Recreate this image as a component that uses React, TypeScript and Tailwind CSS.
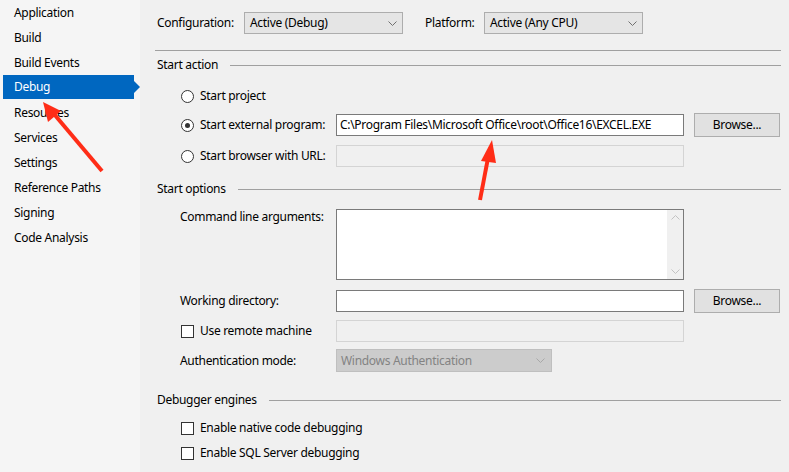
import React from "react";

const navItems = [
  "Application",
  "Build",
  "Build Events",
  "Debug",
  "Resources",
  "Services",
  "Settings",
  "Reference Paths",
  "Signing",
  "Code Analysis",
];

function Chevron({ color = "#707070", up = false }: { color?: string; up?: boolean }) {
  return (
    <svg width="9" height="5" viewBox="0 0 9 5">
      <path
        d={up ? "M0.5 4.5 L4.5 0.5 L8.5 4.5" : "M0.5 0.5 L4.5 4.5 L8.5 0.5"}
        fill="none"
        stroke={color}
        strokeWidth="1"
      />
    </svg>
  );
}

function Select({ value }: { value: string }) {
  return (
    <div className="flex h-[22px] w-[159px] items-center justify-between border border-[#adadad] bg-[#e5e5e5] pl-[5px] pr-[5px]">
      <span>{value}</span>
      <Chevron />
    </div>
  );
}

function TextBox({ value, disabled, className = "" }: { value?: string; disabled?: boolean; className?: string }) {
  return (
    <div
      className={
        "flex h-[22px] w-[348px] items-center pl-[3px] " +
        (disabled ? "border border-[#d4d4d4] bg-[#f0f0f0]" : "border border-[#7a7a7a] bg-white") +
        " " +
        className
      }
    >
      {value}
    </div>
  );
}

function BrowseButton() {
  return (
    <div className="ml-[10px] flex h-[24px] w-[86px] items-center justify-center border border-[#adadad] bg-[#e1e1e1]">
      Browse...
    </div>
  );
}

function Radio({ checked }: { checked?: boolean }) {
  return (
    <div className="flex h-[13px] w-[13px] items-center justify-center rounded-full border border-[#333333] bg-white">
      {checked && <div className="h-[5px] w-[5px] rounded-full bg-[#333333]" />}
    </div>
  );
}

function Checkbox() {
  return <div className="h-[13px] w-[13px] border border-[#333333] bg-white" />;
}

function SectionHeader({ title, className = "" }: { title: string; className?: string }) {
  return (
    <div className={"flex h-[16px] items-center pl-[2px] " + className}>
      <span>{title}</span>
      <div className="ml-[12px] h-px flex-1 bg-[#a0a0a0]" />
    </div>
  );
}

export default function App() {
  return (
    <div className="relative flex h-[472px] w-[789px] overflow-hidden font-['Noto_Sans',sans-serif] text-[12px] leading-[16px] tracking-[-0.3px] text-black">
      {/* side nav */}
      <div className="w-[140px] bg-[#f5f5f5]">
        {navItems.map((item) =>
          item === "Debug" ? (
            <div key={item} className="flex h-[25px] items-start">
              <div className="relative ml-[3px] flex h-[24px] w-[131px] items-center bg-[#0067c0] pl-[11px] text-white">
                {item}
                <div className="absolute right-[-6px] top-[6px] h-0 w-0 border-y-[6px] border-l-[6px] border-y-transparent border-l-[#0067c0]" />
              </div>
            </div>
          ) : (
            <div key={item} className="flex h-[25px] items-center pl-[14px]">
              {item}
            </div>
          )
        )}
      </div>

      {/* page */}
      <div className="flex-1 bg-[#f0f0f0] pl-[15px] pr-[8px] pt-[12px]">
        <div className="flex h-[22px] items-center pl-[2px]">
          <span className="w-[87px]">Configuration:</span>
          <Select value="Active (Debug)" />
          <span className="ml-[22px] w-[59px]">Platform:</span>
          <Select value="Active (Any CPU)" />
        </div>
        <div className="mt-[16px] h-px bg-[#a0a0a0]" />

        <SectionHeader title="Start action" className="mt-[6px]" />
        <div className="mt-[12px] flex h-[22px] items-center pl-[26px]">
          <Radio />
          <span className="ml-[6px]">Start project</span>
        </div>
        <div className="mt-[6px] flex h-[24px] items-center pl-[26px]">
          <div className="flex w-[155px] items-center">
            <Radio checked />
            <span className="ml-[6px]">Start external program:</span>
          </div>
          <TextBox value="C:\Program Files\Microsoft Office\root\Office16\EXCEL.EXE" />
          <BrowseButton />
        </div>
        <div className="mt-[8px] flex h-[22px] items-center pl-[26px]">
          <div className="flex w-[155px] items-center">
            <Radio />
            <span className="ml-[6px]">Start browser with URL:</span>
          </div>
          <TextBox disabled />
        </div>

        <SectionHeader title="Start options" className="mt-[14px]" />
        <div className="mt-[12px] flex items-start pl-[25px]">
          <span className="w-[156px]">Command line arguments:</span>
          <div className="flex h-[71px] w-[348px] border border-[#7a7a7a] bg-white">
            <div className="flex-1" />
            <div className="flex w-[16px] flex-col items-center justify-between bg-[#f0f0f0] py-[5px]">
              <Chevron color="#c2c2c2" up />
              <Chevron color="#c2c2c2" />
            </div>
          </div>
        </div>
        <div className="mt-[9px] flex h-[24px] items-center pl-[25px]">
          <span className="w-[156px]">Working directory:</span>
          <TextBox />
          <BrowseButton />
        </div>
        <div className="mt-[7px] flex h-[22px] items-center pl-[26px]">
          <div className="flex w-[155px] items-center">
            <Checkbox />
            <span className="ml-[6px]">Use remote machine</span>
          </div>
          <TextBox disabled />
        </div>
        <div className="mt-[7px] flex h-[23px] items-center pl-[25px]">
          <span className="w-[156px]">Authentication mode:</span>
          <div className="flex h-[23px] w-[216px] items-center justify-between border border-[#bfbfbf] bg-[#cccccc] pl-[4px] pr-[6px] text-[#838383]">
            <span>Windows Authentication</span>
            <Chevron color="#a8a8a8" />
          </div>
        </div>

        <SectionHeader title="Debugger engines" className="mt-[20px]" />
        <div className="mt-[10px] flex h-[20px] items-center pl-[26px]">
          <Checkbox />
          <span className="ml-[6px]">Enable native code debugging</span>
        </div>
        <div className="mt-[5px] flex h-[20px] items-center pl-[26px]">
          <Checkbox />
          <span className="ml-[6px]">Enable SQL Server debugging</span>
        </div>
      </div>

      {/* annotation arrows */}
      <svg className="pointer-events-none absolute left-0 top-0" width="789" height="472" viewBox="0 0 789 472">
        <line x1="102" y1="171" x2="54" y2="114" stroke="#ff2d17" strokeWidth="4" />
        <polygon points="43,102 61,111 48,122" fill="#ff2d17" />
        <line x1="480" y1="200" x2="488" y2="158" stroke="#ff2d17" strokeWidth="4" />
        <polygon points="492,140 496,163 481,161" fill="#ff2d17" />
      </svg>
    </div>
  );
}
